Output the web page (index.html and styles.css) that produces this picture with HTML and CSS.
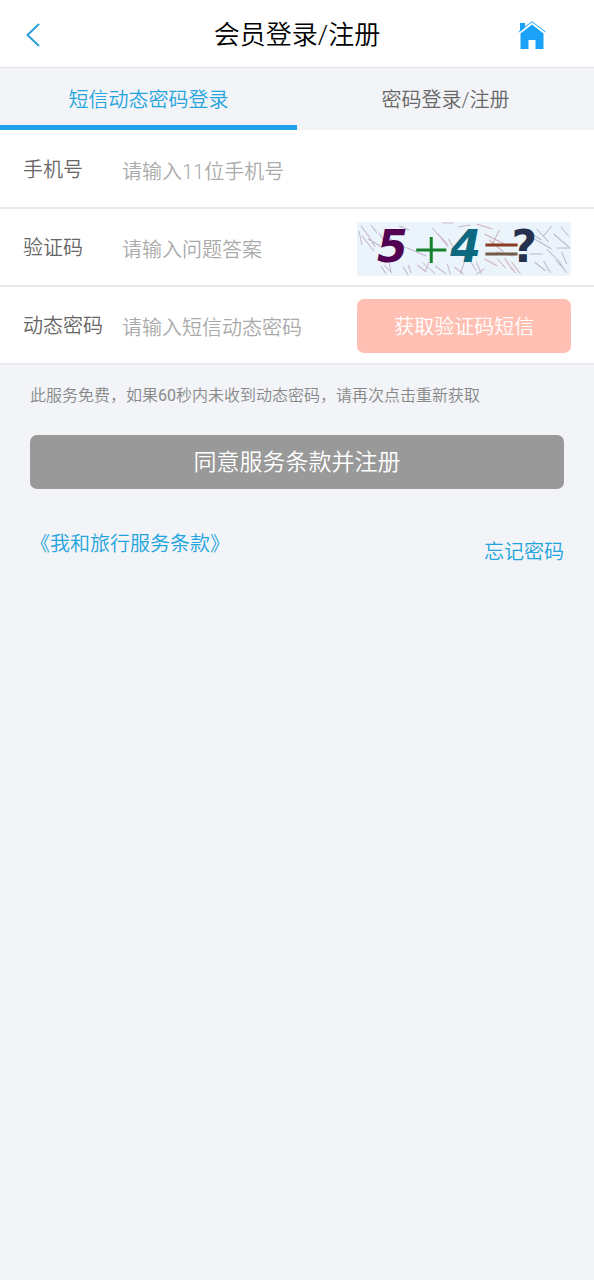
FILE: index.html
```html
<!DOCTYPE html>
<html lang="zh-CN">
<head>
<meta charset="utf-8">
<meta name="viewport" content="width=device-width, initial-scale=1">
<title>会员登录/注册</title>
<link rel="stylesheet" href="styles.css">
</head>
<body>
<header class="header">
  <a class="header-link" href="#" aria-label="返回">
    <svg class="back-icon" viewBox="0 0 14 24" aria-hidden="true"><path d="M13 1 1.5 12 13 23"/></svg>
  </a>
  <h1 class="title">会员登录/注册</h1>
  <a class="header-link header-home" href="#" aria-label="首页">
    <svg class="home-icon" viewBox="0 0 28 28" aria-hidden="true">
      <path d="M2 2h5v5l-5 4zM2.500 12.500 14 3.500l11.500 9V28H17.500v-9H10.500v9h-8z"/>
      <path class="home-roof-gap" d="M1 12.200 14 2.200l13 10"/>
      <path class="home-roof" d="M.5 11 14 .7 27.500 11"/>
    </svg>
  </a>
</header>
<nav class="tabs">
  <a class="tab tab-active" href="#" aria-current="page">短信动态密码登录</a>
  <a class="tab" href="#">密码登录/注册</a>
</nav>
<main>
  <form>
    <div class="rows">
      <div class="row">
        <label class="label" for="phone">手机号</label>
        <input class="field" id="phone" type="tel" placeholder="请输入11位手机号">
      </div>
      <div class="row">
        <label class="label" for="answer">验证码</label>
        <input class="field" id="answer" type="text" placeholder="请输入问题答案">
        <svg class="captcha" viewBox="0 0 213 54" preserveAspectRatio="none" role="img" aria-label="5+4=?">
          <rect width="213" height="54" fill="#ebf4fb"/>
          <g class="scratches">
            <path stroke="#c3b3cd" d="M2 9l3 14M4 4l9 12 5 9M14 3l6 8M22 11l8 13M11 17l14 8M5 14l12 15M33 17l16 9M42 4l10 4M24 44l5 8M27 43l8 8M32 41l2 9M50 26l19 8M46 45l5 8M51 43l3 8"/>
            <path stroke="#cbb7c8" d="M75 6l8 9 8 10M80 11l11 12M85 1h11M60 43l9 7M66 41l12 11M72 40l-4 9M78 44l11 8M90 42l3 10M97 45l9 7M107 40l-4 12M113 39l6 10M119 40l5 12M127 47l-8 5M91 17l8 13M101 5l12-2"/>
            <path stroke="#cfb0bb" d="M127 12l20 10M132 18l14 12M142 8l-7 14M140 37l8 9M147 36l8 12M154 40l9 12M158 51l-8-10M127 37l13 7M138 30l18 4M119 2l16 5"/>
            <path stroke="#b7bace" d="M168 8l16 10M177 17l17 10M179 7l12 13M194 4l-8 10M196 12l15 13M189 27l12 12 8 12M186 39l7 12M177 40l11 9M172 32h13M198 38l10 11M199 26h14M203 5l8 9M204 30l5 12"/>
          </g>
          <g class="captcha-text">
            <text class="captcha-slant" x="20" y="40" fill="#510052">5</text>
            <path d="M59 28h30M74 15v26" stroke="#16812c" stroke-width="3"/>
            <text class="captcha-slant" x="93" y="40" fill="#0d6980">4</text>
            <path d="M128 23h32" stroke="#8a3a20" stroke-width="3"/>
            <path d="M128 32h32" stroke="#735b4b" stroke-width="3"/>
            <text x="154" y="40" fill="#25304f">?</text>
          </g>
        </svg>
      </div>
      <div class="row">
        <label class="label" for="code">动态密码</label>
        <input class="field" id="code" type="text" placeholder="请输入短信动态密码">
        <button class="send" type="button">获取验证码短信</button>
      </div>
    </div>
    <div class="actions">
      <p class="hint">此服务免费，如果<span class="seconds">60</span>秒内未收到动态密码，请再次点击重新获取</p>
      <button class="submit" type="submit">同意服务条款并注册</button>
      <div class="links">
        <a class="link" href="#">《我和旅行服务条款》</a>
        <a class="link link-forgot" href="#">忘记密码</a>
      </div>
    </div>
  </form>
</main>
</body>
</html>
```
FILE: styles.css
```css
* { box-sizing: border-box; }
body {
  margin: 0;
  background: #f2f4f8;
  color: #666;
  font-family: Roboto, "Noto Sans CJK SC", sans-serif;
  font-size: 20px;
  font-weight: 350;
  line-height: 30px;
}
a { text-decoration: none; }
button, input { font: inherit; border: 0; padding: 0; }
.header {
  display: grid;
  grid-template-columns: 1fr auto 1fr;
  align-items: center;
  height: 68px;
  padding: 0 48px 0 26px;
  background: #fff;
  border-bottom: 1px solid #dfe1e4;
}
.header-link { display: flex; padding-top: 2px; }
.header-home { justify-content: flex-end; margin-right: -22px; padding-right: 22px; }
.title {
  margin: 0 -22px 0 0;
  padding-top: 2px;
  color: #000;
  font-size: 26px;
  font-weight: 350;
  line-height: 36px;
}
.back-icon { width: 14px; height: 24px; fill: none; stroke: #2ba0d8; stroke-width: 2; }
.home-icon { width: 28px; height: 28px; fill: #1ba1f8; }
.home-roof-gap { fill: none; stroke: #fff; stroke-width: 1; }
.home-roof { fill: none; stroke: #1ba1f8; stroke-width: 1; }
.tabs { display: flex; }
.tab {
  flex: 1;
  height: 62px;
  padding-top: 17px;
  border-bottom: 5px solid transparent;
  color: #666;
  text-align: center;
}
.tab-active { color: #27a4dd; border-bottom-color: #22a2ec; }
.rows { padding-top: 1px; background: #fff; }
.row {
  display: flex;
  align-items: center;
  min-height: 78px;
  padding: 2px 23px 0;
  border-bottom: 2px solid #e8e9eb;
}
.label { flex: 0 0 99px; }
.field {
  flex: 1;
  min-width: 0;
  height: 54px;
  padding-top: 4px;
  background: transparent;
  color: #666;
  outline: 0;
}
.field::placeholder { color: #aaa; opacity: 1; }
.captcha, .send { flex: 0 0 39%; height: 54px; margin-left: 12px; }
.captcha { margin-top: 2px; }
.scratches { fill: none; stroke-width: 1; }
.captcha-text {
  font-family: "DejaVu Sans", sans-serif;
  font-size: 44px;
  font-weight: 700;
}
.captcha-slant { font-style: italic; }
.send { padding-top: 1px; border-radius: 7px; background: #ffc0b3; color: #fff; }
.actions { padding: 16px 30px; }
.hint { margin: 0; color: #888; font-size: 16px; }
.seconds { font-weight: 400; }
.submit {
  display: block;
  width: 100%;
  height: 54px;
  margin-top: 24px;
  padding-top: 2px;
  border-radius: 7px;
  background: #999;
  color: #fff;
  font-size: 23px;
}
.links { display: flex; justify-content: space-between; margin-top: 40px; }
.link { color: #21a3dc; }
.link-forgot { padding-top: 8px; }
```
